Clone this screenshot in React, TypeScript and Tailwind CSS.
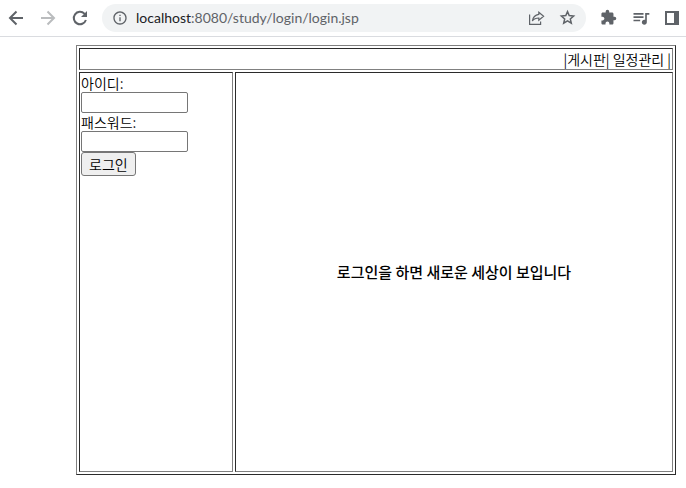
import React from 'react';
import { MdExtension, MdInfoOutline, MdQueueMusic } from 'react-icons/md';

function BackIcon() {
  return (
    <svg width="20" height="20" viewBox="0 0 20 20" fill="none" stroke="currentColor" strokeWidth="2">
      <path d="M17 10H4.5M10.5 3.5L4 10L10.5 16.5" />
    </svg>
  );
}

function ForwardIcon() {
  return (
    <svg width="20" height="20" viewBox="0 0 20 20" fill="none" stroke="currentColor" strokeWidth="2">
      <path d="M3 10H15.5M9.5 3.5L16 10L9.5 16.5" />
    </svg>
  );
}

function ReloadIcon() {
  return (
    <svg width="20" height="20" viewBox="0 0 20 20" fill="none" stroke="currentColor" strokeWidth="2">
      <path d="M15.9 12A6.2 6.2 0 1 1 14.4 5.6L15.5 6.7" />
      <path d="M17 3V9H11Z" fill="currentColor" stroke="none" />
    </svg>
  );
}

function ShareIcon() {
  return (
    <svg width="16" height="16" viewBox="0 0 16 16" fill="none" stroke="currentColor" strokeWidth="1.2" strokeLinejoin="miter">
      <path d="M0.6 4.5V14.4H11.6V11.5" />
      <path d="M9.8 2.2L14.6 6.2L9.8 10.2V8C7 8 4.9 8.8 3.4 11C3.9 7.4 6.2 4.9 9.8 4.4V2.2Z" />
    </svg>
  );
}

function StarIcon() {
  return (
    <svg width="17" height="17" viewBox="0 0 17 17" fill="none" stroke="currentColor" strokeWidth="1.5">
      <path d="M8.5 2.6L10.2 6.6L14.6 7L11.3 9.9L12.3 14.2L8.5 11.9L4.7 14.2L5.7 9.9L2.4 7L6.8 6.6Z" />
    </svg>
  );
}

function SidePanelIcon() {
  return (
    <svg width="14" height="14" viewBox="0 0 14 14" fill="currentColor">
      <path fillRule="evenodd" d="M0 0H14V14H0V0ZM2 2V12H9V2H2Z" />
    </svg>
  );
}

function BrowserBar() {
  return (
    <header className="flex h-[37px] items-center border-b border-[#dadce0] bg-white pb-px pl-1.5 text-[#5f6368]">
      <nav className="flex items-center gap-3">
        <button type="button" aria-label="Back"><BackIcon /></button>
        <button type="button" aria-label="Forward" className="text-[#babcbe]"><ForwardIcon /></button>
        <button type="button" aria-label="Reload"><ReloadIcon /></button>
      </nav>
      <div className="ml-3 flex h-7 flex-1 items-center rounded-full bg-[#f1f3f4] px-2.5">
        <MdInfoOutline size={16} />
        <a href="#" className="ml-2 flex-1 font-['Lato','Noto_Sans',sans-serif] text-[14px] leading-5 font-normal">
          <span className="text-[#202124]">localhost</span>:8080/study/login/login.jsp
        </a>
        <button type="button" aria-label="Share"><ShareIcon /></button>
        <button type="button" aria-label="Bookmark" className="ml-3.5"><StarIcon /></button>
      </div>
      <div className="flex items-center gap-3.5 pr-[7px] pl-3.5">
        <button type="button" aria-label="Extensions"><MdExtension size={17} /></button>
        <button type="button" aria-label="Media"><MdQueueMusic size={20} /></button>
        <button type="button" aria-label="Side panel"><SidePanelIcon /></button>
      </div>
    </header>
  );
}

const cell = 'border border-t-[#2b2b2b] border-r-[#808080] border-b-[#808080] border-l-[#2b2b2b] p-px';
const field = 'block h-[21px] w-[107px] rounded-[2px] border border-[#767676] bg-white px-0.5 text-[14px]';

export default function App() {
  return (
    <div className="min-h-screen bg-white font-['Noto_Sans_CJK_KR',sans-serif] text-[14px] leading-[18px] font-[350] text-black">
      <BrowserBar />
      <div className="pt-2 pr-2.5 pb-3 pl-19">
        <div className="grid grid-cols-[154px_1fr] gap-0.5 border border-t-[#808080] border-r-[#2b2b2b] border-b-[#2b2b2b] border-l-[#808080] p-0.5">
          <nav className={`${cell} col-span-2 text-right`}>
            |<a href="#board">게시판</a>| <a href="#schedule">일정관리</a> |
          </nav>

          <form className={cell} onSubmit={(e) => e.preventDefault()}>
            <label htmlFor="userId" className="block">아이디:</label>
            <input id="userId" type="text" className={field} />
            <label htmlFor="userPw" className="block">패스워드:</label>
            <input id="userPw" type="password" className={field} />
            <button type="submit" className="block h-6 rounded-[3px] border border-[#767676] bg-[#efefef] px-[7px]">
              로그인
            </button>
          </form>

          <main className={`${cell} flex min-h-[400px] items-center justify-center`}>
            <h1 className="text-[15px] font-medium">로그인을 하면 새로운 세상이 보입니다</h1>
          </main>
        </div>
      </div>
    </div>
  );
}
